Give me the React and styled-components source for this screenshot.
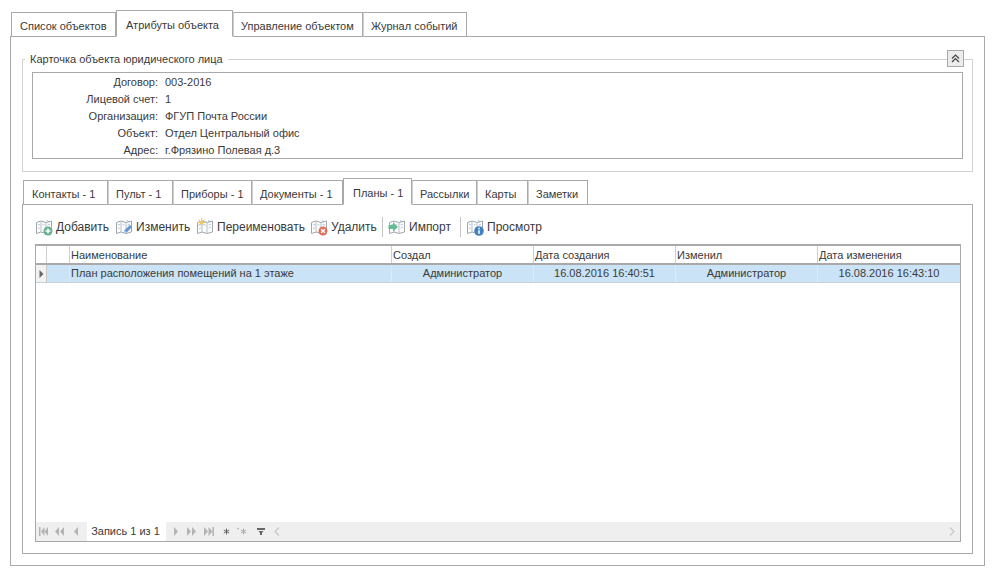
import React from 'react';
import styled, { createGlobalStyle } from 'styled-components';

const Global = createGlobalStyle`
  html, body { margin: 0; padding: 0; background: #fff; }
  body { font-family: "Liberation Sans", Arial, sans-serif; font-size: 11px; color: #3a3a3a; }
  * { box-sizing: border-box; }
`;

const Page = styled.div`
  width: 995px; height: 576px; padding: 10px 10px 0 10px; overflow: hidden;
`;
const TabStrip = styled.div`
  display: flex; align-items: flex-end; height: 27px; padding-left: 1px; position: relative; z-index: 1; margin-bottom: -1px;
`;
const Tab = styled.div`
  width: ${p => p.$w}px;
  height: ${p => (p.$active ? 27 : 25)}px;
  border: 1px solid #a9a9a9;
  border-left-color: ${p => (p.$first || p.$active ? '#a9a9a9' : '#cfcfcf')};
  border-bottom: ${p => (p.$active ? '1px solid #fff' : '1px solid #a9a9a9')};
  background: #fff;
  display: flex; align-items: center; white-space: nowrap;
  padding: ${p => (p.$active ? 2 : 3)}px 0 0 ${p => (p.$active ? 9 : p.$first ? 8 : 7)}px;
`;
const OuterPanel = styled.div`
  width: 975px; height: 530px; border: 1px solid #a9a9a9; padding: 22px 11px 0 11px; background: #fff;
`;
const GroupBox = styled.section`
  position: relative; width: 951px; height: 113px; border: 1px solid #d2d2d2; padding: 12px 9px 0 9px;
`;
const Legend = styled.div`
  position: absolute; left: 2px; top: -7px; padding: 0 5px; background: #fff; line-height: 13px; white-space: nowrap;
`;
const Collapse = styled.button`
  position: absolute; right: 8px; top: -10px; width: 17px; height: 17px; padding: 0;
  border: 1px solid #a9a9a9; background: #ececec; display: flex; align-items: center; justify-content: center;
`;
const Details = styled.div`
  width: 931px; height: 87px; border: 1px solid #a9a9a9; display: grid;
  grid-template-columns: 125px 1fr; grid-auto-rows: 17px; column-gap: 7px; align-items: center;
`;
const Label = styled.div`text-align: right; white-space: nowrap;`;
const Value = styled.div`white-space: nowrap;`;
const InnerTabs = styled.div`margin-top: 6px;`;
const InnerPanel = styled.div`
  width: 951px; height: 350px; border: 1px solid #a9a9a9; padding: 11px 12px 0 12px; background: #fff;
`;
const Toolbar = styled.div`
  display: flex; align-items: center; height: 22px; margin-bottom: 6px; font-size: 12px;
`;
const ToolButton = styled.div`
  display: flex; align-items: center; gap: 3px; width: ${p => p.$w}px; white-space: nowrap; flex: none;
`;
const Separator = styled.div`width: 1px; height: 20px; background: #c4c4c4; margin-right: 5px; flex: none;`;
const Grid = styled.div`
  width: 926px; height: 298px; border: 1px solid #a9a9a9; border-top-width: 2px; display: flex; flex-direction: column; background: #fff;
`;
const Columns = '11px 23px 322px 142px 142px 142px 142px';
const HeaderRow = styled.div`
  display: grid; grid-template-columns: ${Columns}; height: 19px; border-bottom: 2px solid #a9a9a9; flex: none;
`;
const HeaderCell = styled.div`
  border-right: ${p => (p.$last ? 0 : '1px solid #cfcfcf')}; padding: 2px 0 0 1px; line-height: 15px; white-space: nowrap; overflow: hidden;
`;
const DataRow = styled.div`
  display: grid; grid-template-columns: ${Columns}; height: 18px; background: #cbe3f6; border-bottom: 1px solid #c6d2da; flex: none;
`;
const Cell = styled.div`
  border-right: ${p => (p.$last ? 0 : '1px solid #dcebf5')}; line-height: 17px; white-space: nowrap; overflow: hidden;
  text-align: ${p => (p.$center ? 'center' : 'left')}; padding-left: ${p => (p.$center ? 0 : 1)}px;
`;
const Indicator = styled.div`
  background: #f2f2f2; border-right: 1px solid #c8c8c8; display: flex; align-items: center; justify-content: center;
`;
const Spacer = styled.div`flex: 1;`;
const Pager = styled.div`
  height: 19px; background: #efefef; display: flex; align-items: center; flex: none; padding-right: 5px;
`;
const PagerIcon = styled.svg`width: ${p => p.$w}px; height: 9px; flex: none; margin-left: ${p => p.$ml}px;`;
const RecordLabel = styled.div`
  width: 79px; height: 19px; margin-left: 8px; padding-right: 2px; background: #fff; line-height: 19px; text-align: center; font-size: 11px; white-space: nowrap;
`;
const PagerFill = styled.div`flex: 1;`;

const Badge = ({ type }) => {
  if (type === 'add') return (<g><circle cx="13" cy="13" r="4.5" fill="#68b08f" /><path d="M13 10.5v5M10.5 13h5" stroke="#fff" strokeWidth="1.5" /></g>);
  if (type === 'edit') return (<g><path d="M8.5 15.5l1-3.2 5.4-5.4 2.2 2.2-5.4 5.4z" fill="#5e97d2" /><path d="M8.5 15.5l1-3.2 2.2 2.2z" fill="#c2d8ee" /></g>);
  if (type === 'rename') return (<g stroke="#f2c46c" strokeWidth="1"><path d="M5.5 0v9M1 4.5h9M2.3 1.3l6.4 6.4M8.7 1.3l-6.4 6.4" /></g>);
  if (type === 'del') return (<g><circle cx="13" cy="13" r="4.5" fill="#e2705f" /><path d="M11.2 11.2l3.6 3.6M14.8 11.2l-3.6 3.6" stroke="#fff" strokeWidth="1.4" /></g>);
  if (type === 'import') return (<g><path d="M0.5 7h4.5V4.5L10 9l-5 4.5V11H0.5z" fill="#62bd90" /></g>);
  if (type === 'view') return (<g><circle cx="13" cy="13" r="4.8" fill="#4480bc" /><path d="M13 9.8v1.4M13 12.2v3.6" stroke="#fff" strokeWidth="1.6" /></g>);
  return null;
};

const MapIcon = ({ type }) => (
  <svg width="18" height="18" viewBox="0 0 18 18" style={{ flex: 'none' }}>
    <path d="M1.5 4.5L6 3l5 1.5L16.5 3v11L11 15.5 6 14l-4.5 1.5z" fill="#fbfcfd" stroke="#a0a8ae" strokeWidth="1" />
    <path d="M6 3v11M11 4.5v11" stroke="#b9c1c6" strokeWidth="1" />
    <path d="M3 7l2-.6M7.5 6.5l2 .6M12.5 7l2.5-.8M3 10.5l2-.6M12.5 10l2.5-.8" stroke="#bccbd6" strokeWidth="1" />
    <path d="M12 2.5l2 1.5" stroke="#8fb1cf" strokeWidth="1" />
    <Badge type={type} />
  </svg>
);

const tools = [
  { t: 'add', l: 'Добавить', w: 80 },
  { t: 'edit', l: 'Изменить', w: 81 },
  { t: 'rename', l: 'Переименовать', w: 114 },
  { t: 'del', l: 'Удалить', w: 72, sep: true },
  { t: 'import', l: 'Импорт', w: 72, sep: true },
  { t: 'view', l: 'Просмотр', w: 80 },
];

const glyphs = {
  first: { w: 9, ml: 3, d: 'M0 0h1.5v9H0zM5.5 0v9l-3.5-4.5zM9 0v9L5.5 4.5z', f: '#b4b4b4' },
  prevPage: { w: 10, ml: 6, d: 'M5 0v9L1 4.5zM10 0v9L6 4.5z', f: '#b4b4b4' },
  prev: { w: 6, ml: 9, d: 'M5 0v9L1 4.5z', f: '#b4b4b4' },
  next: { w: 6, ml: 7, d: 'M1 0v9l4-4.5z', f: '#b4b4b4' },
  nextPage: { w: 10, ml: 8, d: 'M0 0v9l4-4.5zM5 0v9l4-4.5z', f: '#b4b4b4' },
  last: { w: 10, ml: 7, d: 'M0 0v9l4-4.5zM4.5 0v9l4-4.5zM8.5 0H10v9H8.5z', f: '#b4b4b4' },
};

const PagerGlyph = ({ g }) => {
  const x = glyphs[g];
  return <PagerIcon $w={x.w} $ml={x.ml} viewBox={`0 0 ${x.w} 9`}><path d={x.d} fill={x.f} /></PagerIcon>;
};

const details = [
  ['Договор:', '003-2016'],
  ['Лицевой счет:', '1'],
  ['Организация:', 'ФГУП Почта России'],
  ['Объект:', 'Отдел Центральный офис'],
  ['Адрес:', 'г.Фрязино Полевая д.3'],
];

export default function App() {
  return (
    <Page>
      <Global />
      <TabStrip>
        <Tab $w={105} $first>Список объектов</Tab>
        <Tab $w={117} $active>Атрибуты объекта</Tab>
        <Tab $w={130}>Управление объектом</Tab>
        <Tab $w={104}>Журнал событий</Tab>
      </TabStrip>
      <OuterPanel>
        <GroupBox>
          <Legend>Карточка объекта юридического лица</Legend>
          <Collapse aria-label="Свернуть">
            <svg width="9" height="9" viewBox="0 0 9 9"><path d="M1 4.5L4.5 1 8 4.5M1 8l3.5-3.5L8 8" fill="none" stroke="#444" strokeWidth="1.2" /></svg>
          </Collapse>
          <Details>
            {details.map(([a, b]) => (
              <React.Fragment key={a}><Label>{a}</Label><Value>{b}</Value></React.Fragment>
            ))}
          </Details>
        </GroupBox>
        <InnerTabs>
          <TabStrip>
            <Tab $w={85} $first>Контакты - 1</Tab>
            <Tab $w={65}>Пульт - 1</Tab>
            <Tab $w={79}>Приборы - 1</Tab>
            <Tab $w={91}>Документы - 1</Tab>
            <Tab $w={69} $active>Планы - 1</Tab>
            <Tab $w={65}>Рассылки</Tab>
            <Tab $w={51}>Карты</Tab>
            <Tab $w={60}>Заметки</Tab>
          </TabStrip>
          <InnerPanel>
            <Toolbar>
              {tools.map(b => (
                <React.Fragment key={b.t}>
                  <ToolButton $w={b.w}><MapIcon type={b.t} />{b.l}</ToolButton>
                  {b.sep && <Separator />}
                </React.Fragment>
              ))}
            </Toolbar>
            <Grid>
              <HeaderRow>
                <HeaderCell /><HeaderCell />
                <HeaderCell>Наименование</HeaderCell>
                <HeaderCell>Создал</HeaderCell>
                <HeaderCell>Дата создания</HeaderCell>
                <HeaderCell>Изменил</HeaderCell>
                <HeaderCell $last>Дата изменения</HeaderCell>
              </HeaderRow>
              <DataRow>
                <Indicator><svg width="5" height="8" viewBox="0 0 5 8"><path d="M0.5 0v8L4.5 4z" fill="#666" /></svg></Indicator>
                <Cell />
                <Cell>План расположения помещений на 1 этаже</Cell>
                <Cell $center>Администратор</Cell>
                <Cell $center>16.08.2016 16:40:51</Cell>
                <Cell $center>Администратор</Cell>
                <Cell $center $last>16.08.2016 16:43:10</Cell>
              </DataRow>
              <Spacer />
              <Pager>
                <PagerGlyph g="first" /><PagerGlyph g="prevPage" /><PagerGlyph g="prev" />
                <RecordLabel>Запись 1 из 1</RecordLabel>
                <PagerGlyph g="next" /><PagerGlyph g="nextPage" /><PagerGlyph g="last" />
                <PagerIcon $w={7} $ml={9} viewBox="0 0 7 9"><path d="M3.5 1.5v6M.8 3l5.4 3M6.2 3L.8 6" stroke="#666" strokeWidth="1" /></PagerIcon>
                <PagerIcon $w={10} $ml={7} viewBox="0 0 10 9"><path d="M6.5 1.5v6M3.8 3l5.4 3M9.2 3L3.8 6" stroke="#a8a8a8" strokeWidth="1" /><path d="M0 1l2 1" stroke="#a8a8a8" /></PagerIcon>
                <PagerIcon $w={8} $ml={10} viewBox="0 0 8 9"><path d="M0 1h8v2H0zM1.5 4h5L5 6v2H3V6z" fill="#666" /></PagerIcon>
                <PagerIcon $w={6} $ml={9} viewBox="0 0 6 9"><path d="M5 0.5L1 4.5l4 4" fill="none" stroke="#c8c8c8" strokeWidth="1.3" /></PagerIcon>
                <PagerFill />
                <PagerIcon $w={6} $ml={0} viewBox="0 0 6 9"><path d="M1 0.5l4 4-4 4" fill="none" stroke="#c8c8c8" strokeWidth="1.3" /></PagerIcon>
              </Pager>
            </Grid>
          </InnerPanel>
        </InnerTabs>
      </OuterPanel>
    </Page>
  );
}
